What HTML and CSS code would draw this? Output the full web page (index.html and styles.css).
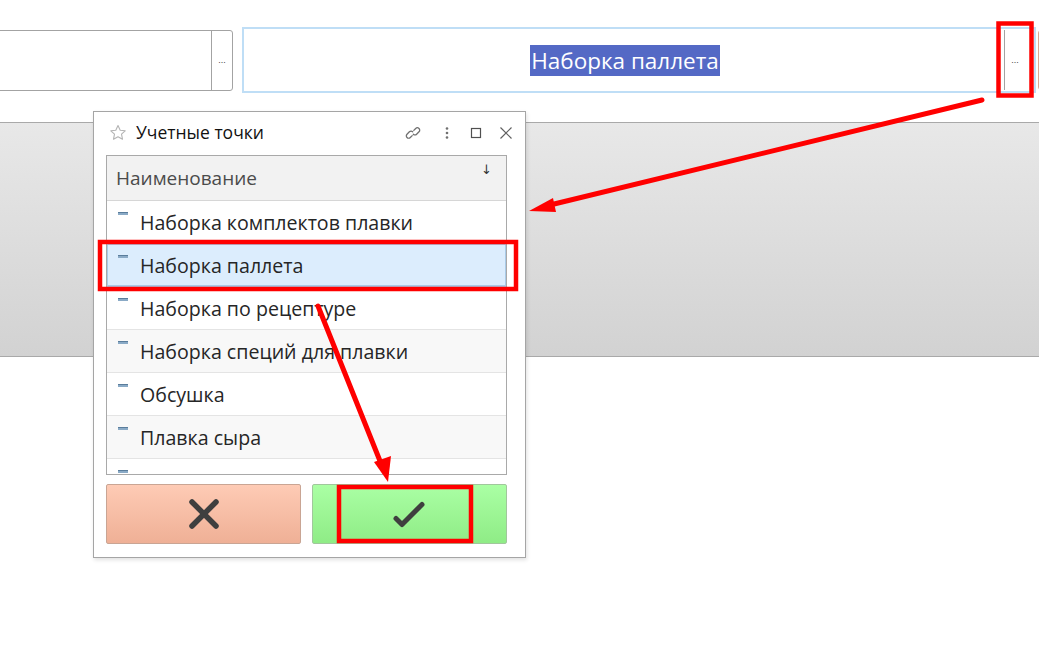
FILE: index.html
```html
<!DOCTYPE html>
<html lang="ru">
<head>
<meta charset="utf-8">
<title>Учетные точки</title>
<link rel="stylesheet" href="styles.css">
</head>
<body>
<div class="page">
  <div class="fields">
    <div class="field field-left">
      <div class="field-input"></div>
      <div class="field-btn">...</div>
    </div>
    <div class="field field-right">
      <div class="field-input"><span class="sel">Наборка паллета</span></div>
      <div class="field-btn">...</div>
    </div>
    <div class="field-next"></div>
  </div>
  <div class="panel"></div>

  <div class="dialog">
    <div class="title">
      <svg class="star" width="18" height="18" viewBox="0 0 18 18"><path d="M9 1.6l2.2 4.6 5 .6-3.7 3.4 1 5-4.5-2.5-4.5 2.5 1-5L1.8 6.8l5-.6z" fill="none" stroke="#b4b4b4" stroke-width="1.1" stroke-linejoin="round"/></svg>
      <span class="title-text">Учетные точки</span>
      <div class="title-icons">
        <svg width="18" height="18" viewBox="0 0 18 18"><g fill="none" stroke="#707070" stroke-width="1.3" stroke-linecap="round"><path d="M8.2 11.6l-1.9 1.9a2.3 2.3 0 0 1-3.3-3.3l2.4-2.4a2.3 2.3 0 0 1 3.3 0"/><path d="M9.8 6.4l1.9-1.9a2.3 2.3 0 0 1 3.3 3.3l-2.4 2.4a2.3 2.3 0 0 1-3.3 0"/></g></svg>
        <svg width="14" height="18" viewBox="0 0 14 18"><g fill="#707070"><circle cx="7" cy="4.5" r="1.3"/><circle cx="7" cy="9" r="1.3"/><circle cx="7" cy="13.5" r="1.3"/></g></svg>
        <svg width="14" height="18" viewBox="0 0 14 18"><rect x="2.5" y="4.5" width="9" height="9" fill="none" stroke="#505050" stroke-width="1.2"/></svg>
        <svg width="16" height="18" viewBox="0 0 16 18"><path d="M2.5 3.5l11 11M13.5 3.5l-11 11" stroke="#606060" stroke-width="1.2"/></svg>
      </div>
    </div>
    <div class="table">
      <div class="thead">
        <span>Наименование</span>
        <span class="sort">↓</span>
      </div>
      <div class="tbody">
        <div class="row"><i class="mark"></i><span>Наборка комплектов плавки</span></div>
        <div class="row selected"><i class="mark"></i><span>Наборка паллета</span></div>
        <div class="row"><i class="mark"></i><span>Наборка по рецептуре</span></div>
        <div class="row alt"><i class="mark"></i><span>Наборка специй для плавки</span></div>
        <div class="row"><i class="mark"></i><span>Обсушка</span></div>
        <div class="row alt"><i class="mark"></i><span>Плавка сыра</span></div>
        <div class="row"><i class="mark"></i><span></span></div>
      </div>
    </div>
    <div class="buttons">
      <div class="btn btn-cancel">
        <svg width="34" height="34" viewBox="0 0 34 34"><path d="M5 5l24 24M29 5L5 29" stroke="#3f3f3f" stroke-width="5.5" stroke-linecap="round"/></svg>
      </div>
      <div class="btn btn-ok">
        <svg width="34" height="30" viewBox="0 0 34 30"><path d="M3 19.5l6 6 20-20" fill="none" stroke="#3f3f3f" stroke-width="5" stroke-linecap="round" stroke-linejoin="round"/></svg>
      </div>
    </div>
  </div>

  <svg class="annot" width="1039" height="647" viewBox="0 0 1039 647">
    <g fill="none" stroke="#ff0000" stroke-width="4.5">
      <rect x="998.5" y="23.5" width="33" height="72"/>
      <rect x="100" y="242" width="416" height="47"/>
      <rect x="339" y="487" width="132" height="54"/>
    </g>
    <g stroke="#ff0000" stroke-width="5" stroke-linecap="round">
      <line x1="982" y1="100" x2="550" y2="205"/>
      <line x1="318" y1="306" x2="382" y2="466"/>
    </g>
    <g fill="#ff0000">
      <polygon points="529,211 553,198 556,212"/>
      <polygon points="388,482 374,462 391,456"/>
    </g>
  </svg>
</div>
</body>
</html>
```

FILE: styles.css
```css
* { box-sizing: border-box; }
html, body { margin: 0; padding: 0; background: #fff; }
body {
  font-family: "Open Sans", "Noto Sans", "Liberation Sans", sans-serif;
  color: #333;
  width: 1039px;
  height: 647px;
  overflow: hidden;
}
.page { position: relative; width: 1039px; height: 647px; }

.fields {
  display: flex;
  align-items: center;
  padding-top: 27px;
  height: 93px;
}
.field { display: flex; background: #fff; flex: none; }
.field-left {
  width: 241px;
  height: 61px;
  margin-left: -8px;
  border: 1px solid #a3a3a3;
  border-radius: 3px;
}
.field-left .field-btn {
  width: 21px;
  border-left: 1px solid #a3a3a3;
}
.field-input { flex: 1; display: flex; align-items: center; justify-content: center; }
.field-btn {
  display: flex; align-items: center; justify-content: center;
  font-size: 9px; color: #444; letter-spacing: 0;
  font-family: "Liberation Sans", sans-serif;
}
.field-right {
  width: 794px;
  height: 66px;
  margin-left: 9px;
  border: 2px solid #bfdef6;
}
.field-right .field-btn {
  width: 30px;
  margin: 1px 0;
  border-left: 1px solid #a3a3a3;
  padding-right: 9px;
}
.sel {
  background: #5469c5;
  color: #fff;
  font-size: 22.5px;
  line-height: 31px;
  padding: 0 1px;
  margin-left: 2px;
}
.field-next {
  flex: none;
  width: 10px;
  height: 60px;
  margin-left: 2px;
  background: #f9c9b3;
  border: 1px solid #d8a890;
  border-radius: 3px;
}

.panel {
  margin-top: 29px;
  height: 235px;
  border-top: 1px solid #a9a9a9;
  border-bottom: 1px solid #a9a9a9;
  background: linear-gradient(#e8e8e8, #d2d2d2);
}

.dialog {
  position: absolute;
  left: 93px;
  top: 111px;
  width: 433px;
  height: 447px;
  background: #fff;
  border: 1px solid #a5a5a5;
  box-shadow: 1px 2px 4px rgba(0,0,0,0.12);
  padding: 0 19px 13px 12px;
  display: flex;
  flex-direction: column;
}
.title {
  height: 43px;
  display: flex;
  align-items: center;
  padding-left: 3px;
}
.star { margin-right: 9px; margin-top: -1px; }
.title-text { font-size: 17.5px; color: #111; flex: 1; margin-top: -2px; }
.title-icons { display: flex; align-items: center; gap: 12px; margin-right: -8px; }
.title-icons svg { display: block; }
.title-icons svg:nth-child(1) { margin-right: 6px; }
.title-icons svg:nth-child(2) { margin-right: 1px; }
.title-icons svg:nth-child(3) { margin-left: 2px; margin-right: 3px; }

.table {
  width: 401px;
  height: 321px;
  border: 1px solid #a9a9a9;
  overflow: hidden;
  display: flex;
  flex-direction: column;
}
.thead {
  height: 45px;
  flex: none;
  background: #f2f2f2;
  border-bottom: 1px solid #d6d6d6;
  display: flex;
  align-items: center;
  justify-content: space-between;
  padding: 0 14px 0 9px;
  font-size: 19px;
  color: #4b4b4b;
}
.sort { font-size: 13px; color: #333; align-self: flex-start; margin-top: 6px; font-family: "DejaVu Sans", sans-serif; }
.row {
  height: 43px;
  flex: none;
  display: flex;
  align-items: center;
  border-bottom: 1px solid #e4e4e4;
  font-size: 19.6px;
  color: #262626;
  position: relative;
  padding-left: 33px;
}
.row.alt { background: #f8f8f8; }
.row.selected { background: #dcedfd; box-shadow: inset 0 0 0 1px #a9cbe8; border-bottom-color: #a9cbe8; }
.mark {
  position: absolute;
  left: 11px;
  top: 11px;
  width: 10px;
  height: 3px;
  background: #8aaac6;
  border-top: 1px solid #5a7d9c;
}
.row span { margin-top: 2px; }

.buttons {
  display: flex;
  gap: 11px;
  margin-top: 9px;
  height: 60px;
  width: 401px;
}
.btn {
  flex: 1;
  display: flex;
  align-items: center;
  justify-content: center;
  border-radius: 2px;
}
.btn-cancel {
  background: linear-gradient(#fecbb5, #efb096);
  border: 1px solid #c9a594;
}
.btn-ok {
  background: linear-gradient(#aaffa4, #8fec86);
  border: 1px solid #a1c79c;
}
.btn svg { display: block; }

.annot { position: absolute; left: 0; top: 0; pointer-events: none; }
```
